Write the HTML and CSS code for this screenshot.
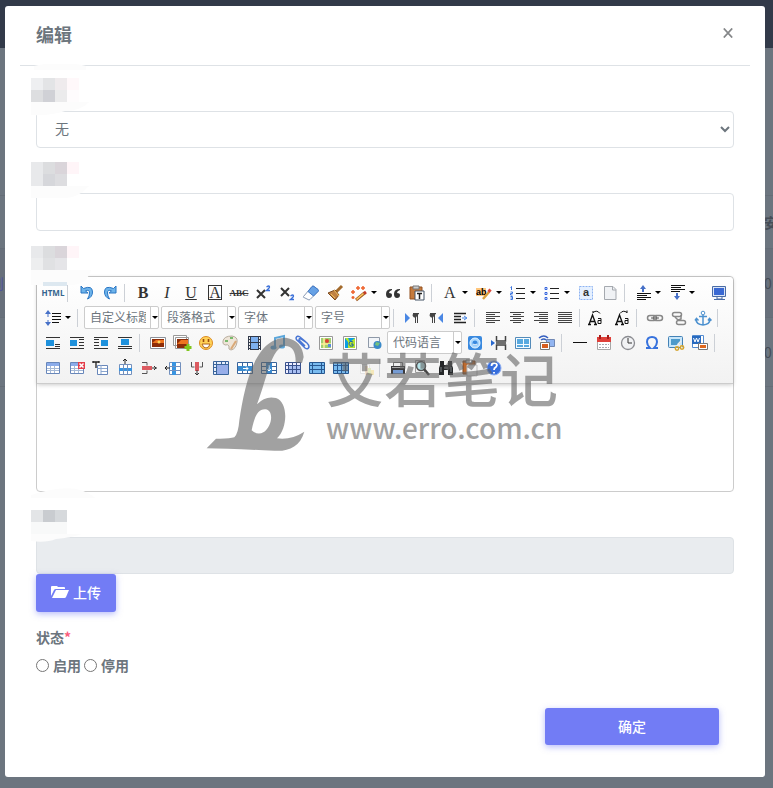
FILE: index.html
```html
<!DOCTYPE html>
<html lang="zh-CN">
<head>
  <meta charset="UTF-8" />
  <meta name="viewport" content="width=device-width, initial-scale=1.0"/>
  <title>编辑</title>
  <link rel="stylesheet" href="styles.css">
</head>
<body>
  <div class="page" aria-hidden="true">
    <div class="topbar"></div>
    <div class="page-head"></div>
    <div class="page-row short"><span></span><span class="cut">安</span></div>
    <div class="page-row odd"><span class="link">则</span><span class="cut">0</span></div>
    <div class="page-row"><span></span><span class="cut">0</span></div>
    <div class="page-row"></div>
  </div>

  <main class="modal" role="dialog" aria-labelledby="modal-title">
    <header class="modal-header">
      <h1 id="modal-title">编辑</h1>
      <button class="close" type="button" aria-label="关闭">
        <svg width="10" height="10" viewBox="0 0 10 10"><path d="M0.8 0.5l8.4 9M9.2 0.5l-8.4 9" stroke="#858789" stroke-width="1.8"/></svg>
      </button>
    </header>

    <form class="form">
      <div class="group">
        <label class="label" for="parent" aria-label="上级">
          <svg class="mosaic" width="60" height="52" viewBox="0 0 60 52">
            <path fill="#fcfcfc" d="M3 2Q30-4 55 2v4H3zM0 38h58q-8 9-24 9q-14 5-34 4z"/>
            <path fill="#eeeff1" d="M0 14h12v12H0z"/><path fill="#e3e4e6" d="M12 14h12v12H12z"/><path fill="#efebed" d="M24 14h12v12H24z"/><path fill="#fff8fa" d="M36 14h12v12H36z"/>
            <path fill="#dddee0" d="M0 26h12v12H0z"/><path fill="#d0d1d6" d="M12 26h12v12H12z"/><path fill="#ebebec" d="M24 26h12v12H24z"/><path fill="#fefcfd" d="M36 26h12v12H36z"/>
          </svg>
        </label>
        <select class="control" id="parent"><option>无</option></select>
      </div>

      <div class="group">
        <label class="label" for="name" aria-label="名称">
          <svg class="mosaic" width="60" height="52" viewBox="0 -2 60 52">
            <path fill="#fcfcfc" d="M0 38h58l-8 7q-6 4-14 5H0z"/>
            <path fill="#e8e9eb" d="M0 14h12v24H0z"/><path fill="#dcdddf" d="M12 14h12v12H12z"/><path fill="#dad5da" d="M24 14h12v12H24z"/><path fill="#fff5f8" d="M36 14h12v12H36z"/>
            <path fill="#d6d7db" d="M12 26h12v12H12z"/><path fill="#dddde0" d="M24 26h12v12H24z"/>
          </svg>
        </label>
        <input class="control" id="name" type="text">
      </div>

      <div class="group">
        <label class="label" for="content" aria-label="内容">
          <svg class="mosaic" width="60" height="57" viewBox="0 -3 60 57">
            <path fill="#fcfcfc" d="M0 38h60q-4 14-18 15H0z"/>
            <path fill="#e8e9eb" d="M0 14h12v12H0z"/><path fill="#dcdddf" d="M12 14h12v12H12z"/><path fill="#dad5da" d="M24 14h12v12H24z"/><path fill="#fff5f8" d="M36 14h12v12H36z"/>
            <path fill="#edeeef" d="M0 26h12v12H0z"/><path fill="#e0e1e3" d="M12 26h12v12H12z"/><path fill="#e5e5e8" d="M24 26h12v12H24z"/>
            <path fill="#dde8f0" d="M12 50h24v4H12z"/>
          </svg>
        </label>
        <div class="editor">
          <div class="toolbar">
            <div class="bar-row">
              <button type="button" class="html" title="源代码">HTML</button>
              <i class="sep"></i>
              <button type="button" title="撤销"><svg viewBox="0 0 20 20"><path d="M5 3v7h7L9.500 8q4-2 4 2 0 3-2 6 5-2 5-7 0-7-9-3.500z" fill="#6db3ea" stroke="#2a76c4"/></svg></button>
              <button type="button" title="重做"><svg viewBox="0 0 20 20"><path d="M16 3v7H9l2.500-2q-4-2-4 2 0 3 2 6-5-2-5-7 0-7 9-3.500z" fill="#6db3ea" stroke="#2a76c4"/></svg></button>
              <i class="sep"></i>
              <button type="button" class="serif" title="加粗"><b>B</b></button>
              <button type="button" class="serif" title="斜体"><em>I</em></button>
              <button type="button" class="serif" title="下划线"><u>U</u></button>
              <button type="button" class="serif" title="字符边框"><span class="boxed">A</span></button>
              <button type="button" class="serif strike" title="删除线"><s>ABC</s></button>
              <button type="button" title="上标"><svg viewBox="0 0 20 20"><path d="M4 7l8 8M12 7l-8 8" stroke="#333" stroke-width="2"/><path d="M13.500 4q3-2 3 0 0 1-3 3.500h3.500" fill="none" stroke="#3b70d8" stroke-width="1.300"/></svg></button>
              <button type="button" title="下标"><svg viewBox="0 0 20 20"><path d="M4 5l8 8M12 5l-8 8" stroke="#333" stroke-width="2"/><path d="M13.500 13q3-2 3 0 0 1-3 3.500h3.500" fill="none" stroke="#3b70d8" stroke-width="1.300"/></svg></button>
              <button type="button" title="清除格式"><svg viewBox="0 0 20 20"><path d="M2.500 13.500L11 3.500q1-1 2 0l4 3q1 1 0 2l-8 8q-1 1-2 0l-4-2q-1 0-.5-1z" fill="#fff" stroke="#8a9bb5"/><path d="M7 8.500l4-5q1-1 2 0l4 3q1 1 0 2l-4.500 4.500z" fill="#66a1e5" stroke="#3f77c6"/></svg></button>
              <button type="button" title="格式刷"><svg viewBox="0 0 20 20"><path d="M17 3l-6 6" stroke="#a36a2c" stroke-width="3"/><path d="M3 10l7-3 4 5-4 5z" fill="#c08245" stroke="#7b481c"/><path d="M9 7l5 6M6 11l4 4" stroke="#f1bf5b"/></svg></button>
              <button type="button" class="has-arrow" title="自动排版"><svg viewBox="0 0 20 20"><path d="M7 17l8.500-7" stroke="#a05a23" stroke-width="3"/><path d="M7.500 16.500l7-6" stroke="#ffcb62" stroke-width="1.500"/><path d="M15 10.500l2-1.500" stroke="#c43a28" stroke-width="3"/><path d="M4 7v4M2 9h4M9 3v4M7 5h4M14 3v4M12 5h4M4 13v3M2.500 14.500h3" stroke="#ee622b" stroke-width="1.500"/></svg></button>
              <button type="button" title="引用"><svg viewBox="0 0 20 20"><path d="M9 6Q3 6 3 11q0 4 3 4t3-3q0-2-3-2 0-2 3-3zM17 6q-6 0-6 5 0 4 3 4t3-3q0-2-3-2 0-2 3-3z" fill="#333"/></svg></button>
              <button type="button" title="纯文本粘贴"><svg viewBox="0 0 20 20"><path d="M3 4h12v12H3z" fill="#c57a3c" stroke="#93501f"/><path d="M6 3h6v3H6z" fill="#ccc" stroke="#777"/><path d="M8 8h9v9H8z" fill="#fff" stroke="#456"/><path d="M10 10.500h5M12.500 10.500V16" stroke="#222" stroke-width="1.500"/></svg></button>
              <i class="sep"></i>
              <button type="button" class="serif has-arrow" title="字体颜色">A</button>
              <button type="button" class="has-arrow" title="背景色"><svg viewBox="0 0 20 20"><path d="M2 5h10v8H2z" fill="#ffc67c"/><text x="2" y="12" font-size="9" font-weight="bold">ab</text><path d="M9 16l6-7" stroke="#d9a03c" stroke-width="2.500"/><path d="M14.500 9l2-2.500" stroke="#db4b3d" stroke-width="3"/></svg></button>
              <button type="button" class="has-arrow" title="有序列表"><svg viewBox="0 0 20 20"><path d="M8 5.500h9M8 10.500h9M8 15.500h9" stroke="#222"/><path d="M3.500 7V3.500l-1 1M2.500 9h2v1.500h-2V12h2M2.500 13.500h2v3h-2m0-1.500h2" fill="none" stroke="#3d76df"/></svg></button>
              <button type="button" class="has-arrow" title="无序列表"><svg viewBox="0 0 20 20"><path d="M8 5.500h9M8 10.500h9M8 15.500h9" stroke="#222"/><path d="M3 4.500h2v2H3zM3 9.500h2v2H3zM3 14.500h2v2H3z" fill="#fff" stroke="#3465dd"/></svg></button>
              <button type="button" title="全选"><svg viewBox="0 0 20 20"><path d="M3.500 3.500h13v13h-13z" fill="#e5f0ff" stroke="#8cb2f2" stroke-dasharray="2 1"/><text x="7" y="13" font-size="11" font-weight="bold" fill="#333">a</text></svg></button>
              <button type="button" title="清空文档"><svg viewBox="0 0 20 20"><path d="M4.500 3.500H13l3 3v10H4.500z" fill="#f0f2f5" stroke="#a5a9af"/><path d="M12.500 4v3H16" fill="none" stroke="#a5a9af"/></svg></button>
              <i class="sep"></i>
              <button type="button" class="has-arrow" title="段前距"><svg viewBox="0 0 20 20"><path d="M4 10.500h14M4 12.500h10M4 14.500h14M4 16.500h9" stroke="#111"/><path d="M10 9V4" stroke="#4670c7" stroke-width="2"/><path d="M7 6l3-4 3 4z" fill="#4670c7"/></svg></button>
              <button type="button" class="has-arrow" title="段后距"><svg viewBox="0 0 20 20"><path d="M4 2.500h14M4 4.500h10M4 6.500h14M4 8.500h9" stroke="#111"/><path d="M10 10v4" stroke="#4670c7" stroke-width="2"/><path d="M7 13l3 4 3-4z" fill="#4670c7"/></svg></button>
              <i class="sep blank"></i>
              <button type="button" title="全屏"><svg viewBox="0 0 20 20"><path d="M2.500 3.500h13v10h-13z" fill="#dbe6f7" stroke="#4a6ca5"/><path d="M4 5h10v7H4z" fill="#3a69d3"/><path d="M7 13v3h5v-3M4 16.500h11" fill="none" stroke="#4a6ca5"/></svg></button>
            </div>

            <div class="bar-row">
              <button type="button" class="has-arrow" title="行间距"><svg viewBox="0 0 20 20"><path d="M9 5.500h9M9 8.500h9M9 11.500h9M9 14.500h7" stroke="#111"/><path d="M5 5v11" stroke="#4670c7" stroke-dasharray="4 3"/><path d="M2 6l3-4 3 4zM2 14l3 4 3-4z" fill="#4670c7"/></svg></button>
              <i class="sep"></i>
              <span class="combo"><select aria-label="自定义标题"><option>自定义标题</option></select></span>
              <span class="combo"><select aria-label="段落格式"><option>段落格式</option></select></span>
              <span class="combo"><select aria-label="字体"><option>字体</option></select></span>
              <span class="combo"><select aria-label="字号"><option>字号</option></select></span>
              <i class="sep"></i>
              <button type="button" title="从左向右输入"><svg viewBox="0 0 20 20"><path d="M3 5l5 5-5 5z" fill="#4a87e4"/><path d="M17 5.500h-5q-3 1 0 4h2" fill="#444"/><path d="M13.500 5v10M15.500 5v10M11 5.500h6" stroke="#444"/></svg></button>
              <button type="button" title="从右向左输入"><svg viewBox="0 0 20 20"><path d="M17 5l-5 5 5 5z" fill="#4a87e4"/><path d="M10 5.500H5q-3 1 0 4h2" fill="#444"/><path d="M6.500 5v10M8.500 5v10M4 5.500h6" stroke="#444"/></svg></button>
              <button type="button" title="首行缩进"><svg viewBox="0 0 20 20"><path d="M4 5.500h12M4 8.500h7M4 11.500h7M4 14.500h12" stroke="#222" stroke-width="1.500"/><path d="M12 10h4M14 8l3 2-3 2" stroke="#4a87e4" fill="none"/></svg></button>
              <i class="sep"></i>
              <button type="button" title="居左对齐"><svg viewBox="0 0 20 20"><path d="M3 4.500h14M3 6.500h9M3 8.500h14M3 10.500h9M3 12.500h14M3 14.500h9" stroke="#444"/></svg></button>
              <button type="button" title="居中对齐"><svg viewBox="0 0 20 20"><path d="M3 4.500h14M6 6.500h8M3 8.500h14M6 10.500h8M3 12.500h14M6 14.500h8" stroke="#444"/></svg></button>
              <button type="button" title="居右对齐"><svg viewBox="0 0 20 20"><path d="M3 4.500h14M8 6.500h9M3 8.500h14M8 10.500h9M3 12.500h14M8 14.500h9" stroke="#444"/></svg></button>
              <button type="button" title="两端对齐"><svg viewBox="0 0 20 20"><path d="M3 4.500h14M3 6.500h14M3 8.500h14M3 10.500h14M3 12.500h14M3 14.500h14" stroke="#444"/></svg></button>
              <i class="sep"></i>
              <button type="button" title="字母大写"><svg viewBox="0 0 20 20"><path d="M1 16.500L4.500 7 8 16.500M2.500 13.500h4M0 16.500h3M6 16.500h3" fill="none" stroke="#111" stroke-width="1.300"/><path d="M10 10.500h3v5h-3v-3h3M5 5V3m0 1.500q4-3 7 1" fill="none" stroke="#111"/></svg></button>
              <button type="button" title="字母小写"><svg viewBox="0 0 20 20"><path d="M4 16.500L7.500 7 11 16.500M5.500 13.500h4M3 16.500h3M9 16.500h3" fill="none" stroke="#111" stroke-width="1.300"/><path d="M13 10.500h3v5h-3v-3h3M15 5V2.500M15 4.500q-4-3-7 1" fill="none" stroke="#111"/></svg></button>
              <i class="sep"></i>
              <button type="button" title="超链接"><svg viewBox="0 0 20 20"><rect x="2.500" y="7.500" width="9" height="5" rx="2.500" fill="none" stroke="#888" stroke-width="1.500"/><rect x="8.500" y="7.500" width="9" height="5" rx="2.500" fill="none" stroke="#888" stroke-width="1.500"/><path d="M6 10h8" stroke="#555"/></svg></button>
              <button type="button" title="取消链接"><svg viewBox="0 0 20 20"><rect x="3.500" y="4.500" width="9" height="4" rx="2" fill="none" stroke="#888" stroke-width="1.500"/><rect x="7.500" y="12.500" width="9" height="4" rx="2" fill="none" stroke="#888" stroke-width="1.500"/><path d="M12 7v4l-3 1M6 9l3 3" fill="none" stroke="#888" stroke-width="1.500"/></svg></button>
              <button type="button" title="锚点"><svg viewBox="0 0 20 20"><path d="M10 7v10M6 8.500h8M3 11q0 5.500 7 6 7-.5 7-6M2 12.500l1.500-2 2 2M15 12.500l1.500-2 2 2" fill="none" stroke="#4d91cf" stroke-width="1.500"/><circle cx="10" cy="5" r="1.800" fill="#fff" stroke="#4d91cf"/></svg></button>
              <i class="sep"></i>
            </div>

            <div class="bar-row">
              <button type="button" title="左浮动"><svg viewBox="0 0 20 20"><path d="M3 4.500h14M12 11.500h5M12 13.500h5M3 15.500h14" stroke="#333"/><path d="M3 7h8v6H3z" fill="#1e91dc"/></svg></button>
              <button type="button" title="左对齐"><svg viewBox="0 0 20 20"><path d="M3 4.500h14M12 6.500h5M12 9.500h5M12 12.500h5M3 15.500h14" stroke="#333"/><path d="M3 7h7v6H3z" fill="#1e91dc"/></svg></button>
              <button type="button" title="右对齐"><svg viewBox="0 0 20 20"><path d="M3 4.500h14M3 6.500h5M3 9.500h5M3 12.500h5M3 15.500h14" stroke="#333"/><path d="M10 7h7v6h-7z" fill="#1e91dc"/></svg></button>
              <button type="button" title="居中"><svg viewBox="0 0 20 20"><path d="M3 4.500h14M3 13.500h14M3 15.500h14" stroke="#333"/><path d="M6 6h8v6H6z" fill="#1e91dc"/></svg></button>
              <i class="sep"></i>
              <button type="button" title="图片"><svg viewBox="0 0 20 20"><path d="M2.500 4.500h15v11h-15z" fill="#fff" stroke="#8b9099"/><path d="M4 6h12v8H4z" fill="#8d2d09"/><path d="M4 10h12V7H8z" fill="#ee7420"/><circle cx="11" cy="9" r="1.500" fill="#ffd75b"/></svg></button>
              <button type="button" title="多图上传"><svg viewBox="0 0 20 20"><path d="M1.500 2.500h13v10h-13zM3.500 4.500h13v11h-13z" fill="#fff" stroke="#999"/><path d="M5 6h11v9H5z" fill="#8d2d09"/><path d="M5 11h11V7H9z" fill="#ee7420"/><path d="M16 11v7M12.500 14.500h7" stroke="#80c61f" stroke-width="3"/></svg></button>
              <button type="button" title="表情"><svg viewBox="0 0 20 20"><circle cx="10" cy="10" r="6.500" fill="#ffd157" stroke="#dc8b22"/><path d="M7.500 6v3M12.500 6v3" stroke="#9a4b0d" stroke-width="1.600"/><path d="M6 11h8q-1 4-4 4t-4-4z" fill="#fff" stroke="#b1651a"/></svg></button>
              <button type="button" title="涂鸦"><svg viewBox="0 0 20 20"><path d="M3 8q1-5 9-5 6 1 5 6-1 7-6 8-3 0-2-4-1-2-4-1-3-1-2-4z" fill="#eee5d8" stroke="#b8ad9e"/><path d="M5 8h3M10 5h3" stroke="#79b96c" stroke-width="2"/><path d="M11 16l5-8" stroke="#d9a978" stroke-width="2"/></svg></button>
              <button type="button" title="视频"><svg viewBox="0 0 20 20"><path d="M4 3h13v14H4z" fill="#323a4b"/><path d="M7 4h7v5H7zM7 10h7v6H7z" fill="#7eb0ef"/><path d="M5.500 4v13M15.500 4v13" stroke="#eee" stroke-dasharray="2 1"/></svg></button>
              <button type="button" title="音乐"><svg viewBox="0 0 20 20"><path d="M7 14V5l9-2v10" fill="none" stroke="#5ba6da" stroke-width="2"/><ellipse cx="5.500" cy="14.500" rx="3" ry="2" fill="#5ba6da"/><ellipse cx="14" cy="13.500" rx="3" ry="2" fill="#5ba6da"/></svg></button>
              <button type="button" title="附件"><svg viewBox="0 0 20 20"><path d="M14 9L8 4Q5 2 4 5q0 2 2 3l7 7q3 2 4-1 0-2-2-4L9 6q-2-1-2 1l6 6" fill="none" stroke="#4976d4" stroke-width="1.500"/></svg></button>
              <button type="button" title="地图"><svg viewBox="0 0 20 20"><path d="M3.500 3.500h13v13h-13z" fill="#fff" stroke="#999"/><path d="M5 5h10v10H5z" fill="#9fcf71"/><path d="M5 11h10M8 5v10" stroke="#fff096" stroke-width="1.500"/><circle cx="11" cy="8" r="2" fill="#df3e31"/><path d="M12 11h3v3h-3z" fill="#598bdc"/></svg></button>
              <button type="button" title="谷歌地图"><svg viewBox="0 0 20 20"><path d="M3.500 3.500h13v13h-13z" fill="#fff" stroke="#999"/><path d="M5 5h10v10H5z" fill="#b5e42c"/><path d="M5 5l3 4v6H5zM8 5h7l-5 4z" fill="#0c9de1"/><path d="M13 9q-3-2-4 1 0 4 4 3v-2h-2" fill="none" stroke="#145fa6"/></svg></button>
              <button type="button" title="插入框架"><svg viewBox="0 0 20 20"><path d="M4.500 4.500h11v10h-11z" fill="#f2f5f9" stroke="#8e99a8"/><circle cx="13.500" cy="12" r="4" fill="#3989c9"/><path d="M12 9l4 1-2 3-3-1z" fill="#74c17c"/></svg></button>
              <span class="combo"><select aria-label="代码语言"><option>代码语言</option></select></span>
              <button type="button" title="百度应用"><svg viewBox="0 0 20 20"><rect x="3" y="3" width="14" height="14" rx="2" fill="#3989df"/><circle cx="10" cy="10" r="5" fill="#a9d7ff" stroke="#e6f5ff"/><circle cx="10" cy="10" r="2.500" fill="#3989df"/><path d="M8 11q2 2 4 0" stroke="#fff" fill="none"/></svg></button>
              <button type="button" title="分页"><svg viewBox="0 0 20 20"><path d="M7.500 3v5h9V3M7.500 17v-5h9v5M7 10h10" fill="none" stroke="#444" stroke-width="1.500"/><path d="M2 7l4 3-4 3z" fill="#2969ce"/></svg></button>
              <button type="button" title="模板"><svg viewBox="0 0 20 20"><path d="M2.500 4.500h15v11h-15z" fill="#f5fbff" stroke="#548bb9"/><path d="M4 6h6v5H4zM11 6h5v5h-5zM4 12h6v2H4zM11 12h5v2h-5z" fill="#58a9df"/></svg></button>
              <button type="button" title="远程图片"><svg viewBox="0 0 20 20"><path d="M9.500 6.500h8v7h-8z" fill="#92b5f1" stroke="#7188b4"/><path d="M2 5q5-4 9 0M4 7q3-2 5 0" fill="none" stroke="#345ebf" stroke-width="1.500"/><path d="M3.500 9.500h9v7h-9z" fill="#fff" stroke="#777"/><path d="M5 11h6v4H5z" fill="#d75c1d"/></svg></button>
              <i class="sep"></i>
              <button type="button" title="分隔线"><svg viewBox="0 0 20 20"><path d="M3 9.500h14" stroke="#111"/></svg></button>
              <button type="button" title="日期"><svg viewBox="0 0 20 20"><path d="M3.500 4.500h13v12h-13z" fill="#fff" stroke="#a7a7a7"/><path d="M3 4h14v5H3z" fill="#df403a"/><path d="M6 2v4M14 2v4" stroke="#a51d1a" stroke-width="2"/><path d="M5 11.500h10M5 14.500h10" stroke="#a9a9b0" stroke-dasharray="2 1"/></svg></button>
              <button type="button" title="时间"><svg viewBox="0 0 20 20"><circle cx="10" cy="10" r="6.500" fill="#f1f2f4" stroke="#8b8c91" stroke-width="1.300"/><path d="M10 5v5h4" fill="none" stroke="#333"/></svg></button>
              <button type="button" title="特殊字符"><svg viewBox="0 0 20 20"><path d="M4 15h4q-3-3-3-6 0-5 5-5t5 5q0 3-3 6h4" fill="none" stroke="#3772dd" stroke-width="2"/></svg></button>
              <button type="button" title="截图"><svg viewBox="0 0 20 20"><rect x="2.500" y="3.500" width="14" height="11" rx="1" fill="#c8e6fa" stroke="#4482b6"/><path d="M5 6h9v6H5z" fill="#4d9acb"/><path d="M10 14l5-6M12 10l4 5" stroke="#eee" stroke-width="1.500"/><circle cx="11" cy="15.500" r="1.700" fill="none" stroke="#d5a52f" stroke-width="1.500"/><circle cx="16" cy="14.500" r="1.700" fill="none" stroke="#d5a52f" stroke-width="1.500"/></svg></button>
              <button type="button" title="图片转存"><svg viewBox="0 0 20 20"><path d="M2.500 2.500h11v12h-11z" fill="#fff" stroke="#548cd1"/><path d="M2 3h9v8H2z" fill="#286abf"/><path d="M3.500 5l1.500 4 1.500-4L8 9l1.500-4" fill="none" stroke="#fff"/><path d="M8.500 10.500h9v6h-9z" fill="#fff" stroke="#777"/><path d="M10 12h6v3h-6z" fill="#de671d"/></svg></button>
              <i class="sep"></i>
            </div>

            <div class="bar-row">
              <button type="button" title="插入表格"><svg viewBox="0 0 20 20"><path d="M3.500 4.500h13v11h-13z" fill="#fff" stroke="#6887ba"/><path d="M4 5h12v3H4z" fill="#8bacea"/><path d="M7.500 8v7M11.500 8v7M4 10.500h12M4 12.500h12" stroke="#a5b9d6"/></svg></button>
              <button type="button" title="删除表格"><svg viewBox="0 0 20 20"><path d="M3.500 4.500h13v11h-13z" fill="#fff" stroke="#6887ba"/><path d="M4 5h12v3H4z" fill="#8bacea"/><path d="M7.500 8v7M11.500 8v7M4 10.500h12M4 12.500h12" stroke="#a5b9d6"/><path d="M11 4h7v7h-7z" fill="#e33f4b"/><path d="M12.500 5.500l4 4M16.500 5.500l-4 4" stroke="#fff" stroke-width="1.500"/></svg></button>
              <button type="button" title="表格前插入行"><svg viewBox="0 0 20 20"><path d="M2 4h6M5 4v6M2 3v2M8 3v2" stroke="#222" stroke-width="1.300"/><path d="M6.500 7.500h10v9h-10z" fill="#fff" stroke="#6887ba"/><path d="M10 7v9M6 10.500h10M10 13.500h6" stroke="#8ba6cf"/></svg></button>
              <button type="button" title="前插入行"><svg viewBox="0 0 20 20"><path d="M4.500 6.500h12v10h-12z" fill="#fff" stroke="#7390bd"/><path d="M4 10h13v3H4z" fill="#3994e0"/><path d="M8.500 6v10M12.500 6v10" stroke="#7390bd"/><path d="M10 6V1M8 3l2-2 2 2" stroke="#222" fill="none"/></svg></button>
              <button type="button" title="删除行"><svg viewBox="0 0 20 20"><path d="M3 4.500h5v3M3 15.500h5v-3" fill="none" stroke="#555"/><path d="M3 8h10v4H3z" fill="#dc5b61"/><path d="M13 10h5M15 8l2 2-2 2" stroke="#333" fill="none"/></svg></button>
              <button type="button" title="前插入列"><svg viewBox="0 0 20 20"><path d="M6.500 4.500h11v12h-11z" fill="#fff" stroke="#7390bd"/><path d="M9 4h4v13H9z" fill="#3994e0"/><path d="M6 8.500h11M6 12.500h11" stroke="#7390bd"/><path d="M7 10H2M4 8l-2 2 2 2" stroke="#222" fill="none"/></svg></button>
              <button type="button" title="删除列"><svg viewBox="0 0 20 20"><path d="M4.500 4v5h3M15.500 4v5h-3" fill="none" stroke="#555"/><path d="M8 4h4v9H8z" fill="#dc5b61"/><path d="M10 12v5M8 15l2 2 2-2" stroke="#333" fill="none"/></svg></button>
              <button type="button" title="合并单元格"><svg viewBox="0 0 20 20"><path d="M2.500 3.500h15v13h-15z" fill="#e6eefb" stroke="#39649b"/><path d="M6 7h11v9H6z" fill="#97aee9"/><path d="M2 6.500h15M5.500 3v13M10.500 3v3M14.500 3v3M3 9.500h3M3 13.500h3" stroke="#39649b"/></svg></button>
              <button type="button" title="右合并单元格"><svg viewBox="0 0 20 20"><path d="M2.500 4.500h15v11h-15z" fill="#fff" stroke="#39649b"/><path d="M3 8h14v5H3z" fill="#3a8bd0"/><path d="M7.500 4v4M12.500 4v4M7.500 13v3M12.500 13v3" stroke="#39649b"/><path d="M8 10.500h5M11 8.500l2 2-2 2" stroke="#fff" fill="none"/></svg></button>
              <button type="button" title="下合并单元格"><svg viewBox="0 0 20 20"><path d="M2.500 4.500h15v11h-15z" fill="#fff" stroke="#39649b"/><path d="M7 5h6v10H7z" fill="#3a8bd0"/><path d="M3 8.500h4M13 8.500h4M3 12.500h4M13 12.500h4" stroke="#39649b"/><path d="M10 7v6M8 11l2 2 2-2" stroke="#fff" fill="none"/></svg></button>
              <button type="button" title="拆分单元格"><svg viewBox="0 0 20 20"><path d="M2.500 4.500h15v11h-15z" fill="#eef" stroke="#39518d"/><path d="M6 7h11v8H6z" fill="#a9bff2"/><path d="M5.500 4v11M9.500 4v11M13.500 4v11M3 7.500h14M3 11.500h14" stroke="#39518d"/></svg></button>
              <button type="button" title="拆分成行"><svg viewBox="0 0 20 20"><path d="M2.500 4.500h15v11h-15z" fill="#79bbef" stroke="#275891"/><path d="M5.500 4v12M14.500 4v12M3 7.500h14M3 11.500h14" stroke="#275891"/></svg></button>
              <button type="button" title="拆分成列"><svg viewBox="0 0 20 20"><path d="M2.500 4.500h15v11h-15z" fill="#79bbef" stroke="#275891"/><path d="M6.500 4v12M10.500 4v12M14.500 4v12M3 7.500h14M3 12.500h14" stroke="#275891"/></svg></button>
              <button type="button" class="faded" title="图表"><svg viewBox="0 0 20 20"><path d="M5.500 6.500h9v9h-9z" fill="#fff" stroke="#ddd"/><path d="M10 8h3v9h-3z" fill="#f3d9bb"/><path d="M13 10h3v7h-3z" fill="#dbe6ae"/><path d="M16 12h3v5h-3z" fill="#f5e3a3"/></svg></button>
              <i class="sep"></i>
              <button type="button" title="打印"><svg viewBox="0 0 20 20"><path d="M5.500 4.500h9v4h-9z" fill="#eee" stroke="#777"/><path d="M3 8h14v8H3z" fill="#3b3b3e"/><path d="M5 12h10v4H5z" fill="#759bd3"/><path d="M4 9.500h12" stroke="#aaa"/></svg></button>
              <button type="button" title="预览"><svg viewBox="0 0 20 20"><path d="M3.500 2.500h9v12h-9z" fill="#eee" stroke="#999"/><circle cx="9" cy="8" r="4.500" fill="#b6e3e8" stroke="#555" stroke-width="1.500"/><path d="M12 11l5 6" stroke="#444" stroke-width="2.500"/></svg></button>
              <button type="button" title="查询替换"><svg viewBox="0 0 20 20"><path d="M4 3h4v4h4V3h4v4l1 3v7h-5v-5H8v5H3v-7l1-3z" fill="#252729"/><path d="M5 9v5M15 9v5M8 10h4" stroke="#808789"/></svg></button>
              <button type="button" title="粘贴"><svg viewBox="0 0 20 20"><path d="M3 3h12v13H3z" fill="#bc6b30" stroke="#85471b"/><path d="M6 2h6v3H6z" fill="#ddd" stroke="#777"/><path d="M7 7h10v11H7z" fill="#f4f4f4" stroke="#bbb"/></svg></button>
              <button type="button" title="帮助"><svg viewBox="0 0 20 20"><circle cx="10" cy="10" r="7" fill="#376edd" stroke="#8cacf0"/><path d="M7.500 8q0-3 3-3 4 1 1.500 4-2 1-2 3M10 14v1.500" fill="none" stroke="#fff" stroke-width="1.800"/></svg></button>
            </div>
          </div>
          <textarea class="editor-body" id="content"></textarea>
          <div class="watermark" aria-hidden="true">
            <svg class="watermark-logo" width="100" height="115" viewBox="50 20 300 345"><path fill-rule="evenodd" d="M52 354L80 325Q120 326 135 321Q147 310 150 270C165 170 195 22 290 22Q338 30 343 80L338 98H319Q320 47 288 47C245 50 235 140 203 222Q228 195 260 203C298 215 295 295 263 324Q305 330 345 304C332 350 296 364 255 361Q120 355 52 354ZM187 300C195 260 205 235 229 237C255 241 248 290 222 306Q205 316 187 300Z"/></svg>
            <div class="watermark-text">
              <strong>艾若笔记</strong>
              <span>www.erro.com.cn</span>
            </div>
          </div>
        </div>
      </div>

      <div class="group upload">
        <label class="label" for="file" aria-label="文件">
          <svg class="mosaic" width="64" height="62" viewBox="0 0 64 62">
            <path fill="#fcfcfc" d="M0 12V9Q45-6 64 12zM0 48h51q-12 4-26 5-10 4-25 2z"/>
            <path fill="#e3e5e7" d="M0 24h12v12H0z"/><path fill="#c9ccd0" d="M12 24h12v12H12z"/><path fill="#d6d9dc" d="M24 24h12v12H24z"/>
            <path fill="#f8f9f9" d="M0 36h36v12H0z"/>
          </svg>
        </label>
        <input class="control" id="file" type="text" disabled>
        <button class="btn" type="button">
          <svg width="18" height="14" viewBox="0 0 18 14" fill="#fff"><path d="M0 11V2Q0 1 1 1h5l1 1h6q1 0 1 1v1H5Q3.500 4 3 5z"/><path d="M5 5h13l-3 7q-.5 1-1.500 1H1z"/></svg>
          上传
        </button>
      </div>

      <fieldset class="status">
        <legend>状态<span class="required">*</span></legend>
        <label><input type="radio" name="status"> 启用</label>
        <label><input type="radio" name="status"> 停用</label>
      </fieldset>

      <div class="actions">
        <button class="btn submit" type="submit">确定</button>
      </div>
    </form>
  </main>
</body>
</html>
```
FILE: styles.css
```css
* {
  box-sizing: border-box;
}

body {
  margin: 0;
  padding: 6px 8px 11px 5px;
  background: #6c757f;
  color: #6c757d;
  font: 14px/20px "Noto Sans CJK SC", sans-serif;
}

button, input, select, textarea {
  font: inherit;
  color: inherit;
}

button {
  cursor: pointer;
}

/* page behind the dialog */
.page {
  position: absolute;
  inset: 0;
  overflow: hidden;
}

.topbar {
  height: 48px;
  background: #323a49;
}

.page-head {
  height: 147px;
}

.page-row {
  display: flex;
  justify-content: space-between;
  align-items: center;
  height: 69px;
  border-top: 1px solid #656d77;
  color: #464d57;
}

.page-row.short {
  height: 53px;
  font-weight: bold;
}

.page-row.odd {
  background: #68707b;
}

.page-row span {
  width: 9px;
  white-space: nowrap;
}

.page-row .link {
  display: flex;
  justify-content: flex-end;
  width: 4px;
  color: #50569b;
}

/* dialog */
.modal {
  position: relative;
  min-height: 771px;
  padding: 0 15px;
  background: #fff;
  border-radius: 3px;
}

.modal-header {
  display: flex;
  justify-content: space-between;
  align-items: center;
  height: 60px;
  padding: 0 17px 4px 16px;
  border-bottom: 1px solid #dee2e6;
}

.modal-header h1 {
  margin: 0;
  font-size: 18px;
}

.close {
  display: flex;
  padding: 0;
  margin-bottom: 2px;
  background: none;
  border: 0;
}

.form {
  padding: 17px 16px 0;
}

.group {
  position: relative;
  margin-bottom: 17px;
}

.label {
  display: block;
  height: 28px;
}

/* pixelated captions, they overlap the rules and field borders */
.mosaic {
  position: absolute;
  left: -5px;
  top: -19px;
  z-index: 1;
}

.control {
  display: block;
  width: 100%;
  height: 37px;
  padding: 0 14px 3px;
  background: #fff;
  border: 1px solid #dee2e6;
  border-radius: 4px;
}

input.control:enabled {
  height: 38px;
}

.control:disabled {
  background: #e9ecef;
}

/* editor */
.editor {
  position: relative;
  border: 1px solid #ccc;
  border-radius: 4px;
}

.toolbar {
  padding: 3px 0 3px 4px;
  background: linear-gradient(#fff, #f2f2f2);
  border-bottom: 1px solid #ccc;
  border-radius: 4px 4px 0 0;
  box-shadow: 0 1px 4px rgba(0,0,0,0.2);
}

.bar-row {
  display: flex;
  flex-wrap: wrap;
  align-items: center;
  min-height: 25px;
}

.bar-row button {
  display: flex;
  align-items: center;
  justify-content: center;
  width: 24px;
  height: 24px;
  padding: 0;
  color: #333;
  background: none;
  border: 0;
}

.bar-row button svg {
  flex: none;
  width: 20px;
  height: 20px;
  font-family: "Liberation Sans", sans-serif;
}

.bar-row .has-arrow {
  justify-content: flex-start;
  gap: 2px;
  width: 34px;
  padding-left: 2px;
}

.has-arrow::after {
  content: "";
  border: 3px solid transparent;
  border-top-color: #000;
  border-bottom: 0;
}

.bar-row .serif {
  font: 16px "Liberation Serif", serif;
}

.bar-row .serif.has-arrow {
  padding-left: 6px;
  gap: 6px;
}

.bar-row .serif.strike {
  font-size: 9px;
  font-weight: bold;
}

.bar-row .html {
  font: bold 8px "Open Sans", sans-serif;
  color: #35658e;
}

.boxed {
  width: 14px;
  border: 1px solid #333;
  line-height: 13px;
}

.faded {
  opacity: 0.7;
}

.sep {
  width: 1px;
  height: 18px;
  margin: 0 6px 0 2px;
  background: #ccd0d6;
}

.sep.blank {
  background: none;
}

.combo {
  position: relative;
  width: 75px;
  height: 23px;
  margin: 0 1px;
  background: #fff;
  border: 1px solid #ccc;
  border-radius: 2px;
}

.sep + .combo {
  margin-left: 0;
}

.combo select {
  appearance: none;
  display: block;
  width: 66px;
  height: 21px;
  padding: 0 4px 2px 5px;
  font-size: 12px;
  background: none;
  border: 0;
  border-right: 1px solid #ccc;
}

.combo::after {
  content: "";
  position: absolute;
  right: 0;
  top: 9px;
  border: 3px solid transparent;
  border-top-color: #000;
  border-bottom: 0;
}

.editor-body {
  display: block;
  width: 100%;
  height: 107px;
  padding: 8px;
  background: none;
  border: 0;
  resize: none;
}

.watermark {
  position: absolute;
  left: 169px;
  top: 60px;
  display: flex;
  gap: 20px;
  color: #646464;
  opacity: 0.6;
  pointer-events: none;
}

.watermark-logo {
  fill: #646464;
}

.watermark-text {
  padding-top: 10px;
}

.watermark-text strong {
  display: block;
  font-size: 58px;
  font-weight: 500;
  line-height: 60px;
}

.watermark-text span {
  display: block;
  font-size: 28px;
  font-weight: 500;
  line-height: 40px;
}

.upload .mosaic {
  top: -23px;
}

.btn {
  display: flex;
  align-items: center;
  justify-content: center;
  gap: 4px;
  height: 38px;
  padding: 0 15px 2px;
  color: #fff;
  font-weight: 500;
  background: #727cf5;
  border: 0;
  border-radius: 3px;
  box-shadow: 0 2px 6px rgba(114,124,245,0.5);
}

.upload {
  margin-bottom: 15px;
}

.status {
  display: flex;
  gap: 3px;
  margin: 0;
  padding: 0;
  border: 0;
  font-weight: bold;
}

.status legend {
  padding: 0;
  margin-bottom: 8px;
}

.required {
  color: #fa5c7c;
}

.status label {
  display: flex;
  align-items: center;
  gap: 4px;
}

.status input {
  width: 13px;
  height: 13px;
  margin: 0;
}

.actions {
  display: flex;
  justify-content: flex-end;
  padding: 33px 15px 0 0;
}

.submit {
  width: 174px;
  height: 37px;
}
```
